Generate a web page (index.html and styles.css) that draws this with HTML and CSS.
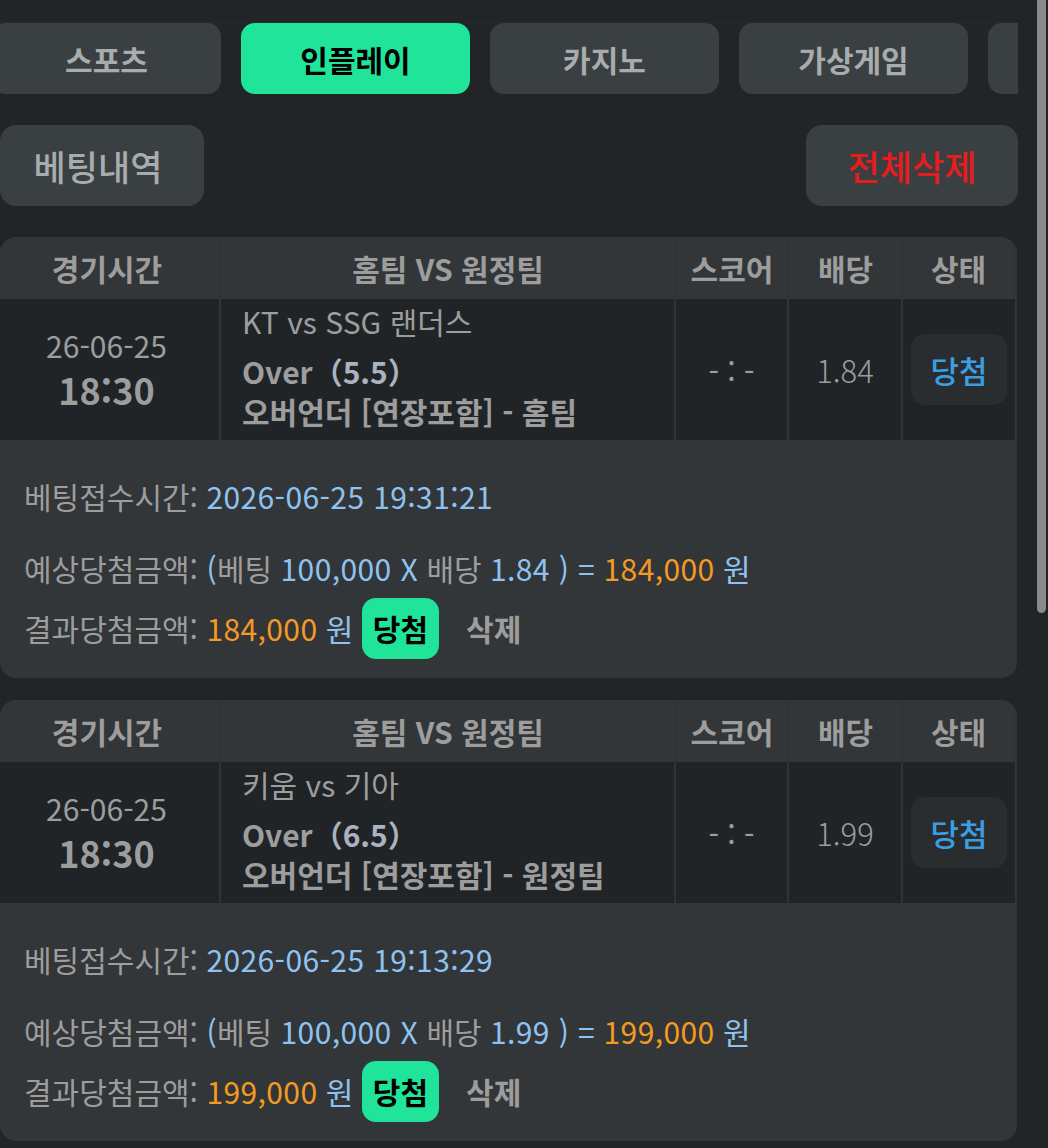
FILE: index.html
```html
<!DOCTYPE html>
<html lang="ko">
<head>
  <meta charset="UTF-8" />
  <meta name="viewport" content="width=device-width, initial-scale=1.0"/>
  <title>베팅내역</title>
  <link rel="stylesheet" href="styles.css">
</head>
<body>

<div class="page">
  <nav class="tabs">
    <a class="tab">스포츠</a>
    <a class="tab active">인플레이</a>
    <a class="tab">카지노</a>
    <a class="tab">가상게임</a>
    <a class="tab"></a>
  </nav>

  <div class="actions">
    <button class="btn">베팅내역</button>
    <button class="btn btn-danger">전체삭제</button>
  </div>

  <section class="bet-card">
    <div class="bet-table">
      <div class="th">경기시간</div>
      <div class="th">홈팀 VS 원정팀</div>
      <div class="th">스코어</div>
      <div class="th">배당</div>
      <div class="th">상태</div>

      <div class="td td-time">
        <span class="date">26-06-25</span>
        <span class="time">18:30</span>
      </div>
      <div class="td td-match">
        <div class="teams">KT vs SSG 랜더스</div>
        <div class="pick">Over<span class="line">（5.5）</span></div>
        <div class="pick">오버언더 [연장포함] - 홈팀</div>
      </div>
      <div class="td td-score">- : -</div>
      <div class="td td-odds">1.84</div>
      <div class="td"><span class="status">당첨</span></div>
    </div>

    <div class="bet-info">
      <p class="info-row first">베팅접수시간: <span class="blue">2026-06-25 19:31:21</span></p>
      <p class="info-row">예상당첨금액: <span class="blue">(</span>베팅 <span class="blue">100,000 X</span> 배당 <span class="blue">1.84 ) =</span> <span class="orange">184,000</span> <span class="blue">원</span></p>
      <p class="info-row">결과당첨금액: <span class="orange">184,000</span> <span class="blue">원</span><span class="badge">당첨</span><a class="delete">삭제</a></p>
    </div>
  </section>

  <section class="bet-card">
    <div class="bet-table">
      <div class="th">경기시간</div>
      <div class="th">홈팀 VS 원정팀</div>
      <div class="th">스코어</div>
      <div class="th">배당</div>
      <div class="th">상태</div>

      <div class="td td-time">
        <span class="date">26-06-25</span>
        <span class="time">18:30</span>
      </div>
      <div class="td td-match">
        <div class="teams">키움 vs 기아</div>
        <div class="pick">Over<span class="line">（6.5）</span></div>
        <div class="pick">오버언더 [연장포함] - 원정팀</div>
      </div>
      <div class="td td-score">- : -</div>
      <div class="td td-odds">1.99</div>
      <div class="td"><span class="status">당첨</span></div>
    </div>

    <div class="bet-info">
      <p class="info-row first">베팅접수시간: <span class="blue">2026-06-25 19:13:29</span></p>
      <p class="info-row">예상당첨금액: <span class="blue">(</span>베팅 <span class="blue">100,000 X</span> 배당 <span class="blue">1.99 ) =</span> <span class="orange">199,000</span> <span class="blue">원</span></p>
      <p class="info-row">결과당첨금액: <span class="orange">199,000</span> <span class="blue">원</span><span class="badge">당첨</span><a class="delete">삭제</a></p>
    </div>
  </section>
</div>

<div class="scrollbar"></div>

</body>
</html>
```

FILE: styles.css
```css
:root {
  --bg-dark: #222527;
  --panel: #323638;
  --button: #3a3f42;
  --cell-line: #303436;
  --green: #21e49b;
  --red: #e81c1c;
  --text-muted: #9d9d9d;
  --text-tab: #a9acae;
  --blue: #8fc2f1;
  --status-blue: #3c9ee2;
  --orange: #f29a22;
}

* {
  margin: 0;
  padding: 0;
  box-sizing: border-box;
  font-family: 'Noto Sans CJK KR', 'Noto Sans', sans-serif;
}

html, body {
  height: 100%;
  background: var(--bg-dark);
  color: var(--text-muted);
  overflow: hidden;
}

.page {
  width: 1018px;
}

/* tab bar */
.tabs {
  display: flex;
  gap: 20px;
  margin-top: 22px;
  border-top: 1px solid #262b30;
  overflow: hidden;
}

.tab {
  flex: 0 0 229px;
  height: 71px;
  display: flex;
  justify-content: center;
  align-items: center;
  border-radius: 14px;
  background: var(--button);
  color: var(--text-tab);
  font-size: 30px;
  font-weight: bold;
}

.tab:first-child {
  margin-left: -8px;
}

.tab.active {
  background: var(--green);
  color: #000;
}

/* action buttons */
.actions {
  display: flex;
  justify-content: space-between;
  margin-top: 31px;
}

.btn {
  height: 81px;
  border: none;
  border-radius: 16px;
  background: var(--button);
  color: var(--text-tab);
  font-size: 35px;
  font-weight: 500;
}

.btn:first-child {
  width: 204px;
  padding-right: 8px;
}

.btn-danger {
  width: 212px;
  color: var(--red);
}

/* bet card */
.bet-card {
  width: 1017px;
  margin-top: 31px;
  border-radius: 16px;
  background: var(--panel);
  overflow: hidden;
}

.bet-card + .bet-card {
  margin-top: 22px;
}

.bet-table {
  width: 1015px;
  display: grid;
  grid-template-columns: 221px 455px 113px 114px 1fr;
}

.th {
  height: 62px;
  display: flex;
  justify-content: center;
  align-items: center;
  font-size: 30px;
  font-weight: bold;
  color: var(--text-muted);
  border-right: 1px solid #2c3032;
}

.th:first-child,
.td-time {
  padding-right: 6px;
}

.th:last-child,
.td:last-child {
  border-right: none;
}

.td {
  height: 141px;
  display: flex;
  justify-content: center;
  align-items: center;
  background: #212426;
  border-right: 2px solid var(--cell-line);
  font-size: 30px;
  color: var(--text-muted);
}

.td-time {
  flex-direction: column;
  padding-bottom: 5px;
}

.td-time span {
  line-height: 44px;
}

.time {
  font-size: 36px;
  font-weight: bold;
}

.td-match {
  flex-direction: column;
  align-items: flex-start;
  justify-content: flex-start;
  padding-left: 21px;
}

.teams {
  line-height: 44px;
  margin-bottom: 8px;
}

.pick {
  line-height: 40px;
  font-weight: bold;
}

.pick .line {
  color: #aab3bf;
}

.td-odds {
  font-size: 31px;
  font-weight: 300;
}

.status {
  width: 96px;
  height: 71px;
  display: flex;
  justify-content: center;
  align-items: center;
  border-radius: 14px;
  background: #2a2d2f;
  color: var(--status-blue);
  font-size: 31px;
  font-weight: 500;
}

/* bet info */
.bet-info {
  height: 238px;
  padding: 26px 24px 0;
}

.info-row {
  height: 60px;
  line-height: 60px;
  font-size: 30px;
  white-space: nowrap;
}

.info-row.first {
  margin-bottom: 12px;
}

.blue,
.orange {
  letter-spacing: 0.4px;
}

.blue {
  color: var(--blue);
}

.orange {
  color: var(--orange);
}

.badge {
  display: inline-block;
  height: 61px;
  line-height: 61px;
  margin-left: 8px;
  padding: 0 11px;
  vertical-align: top;
  border-radius: 14px;
  background: var(--green);
  color: #000;
  font-weight: bold;
}

.delete {
  margin-left: 27px;
  font-weight: bold;
}

.scrollbar {
  position: fixed;
  top: 0;
  right: 2px;
  width: 9px;
  height: 613px;
  border-radius: 0 0 5px 5px;
  background: #8a8a8a;
}
```
